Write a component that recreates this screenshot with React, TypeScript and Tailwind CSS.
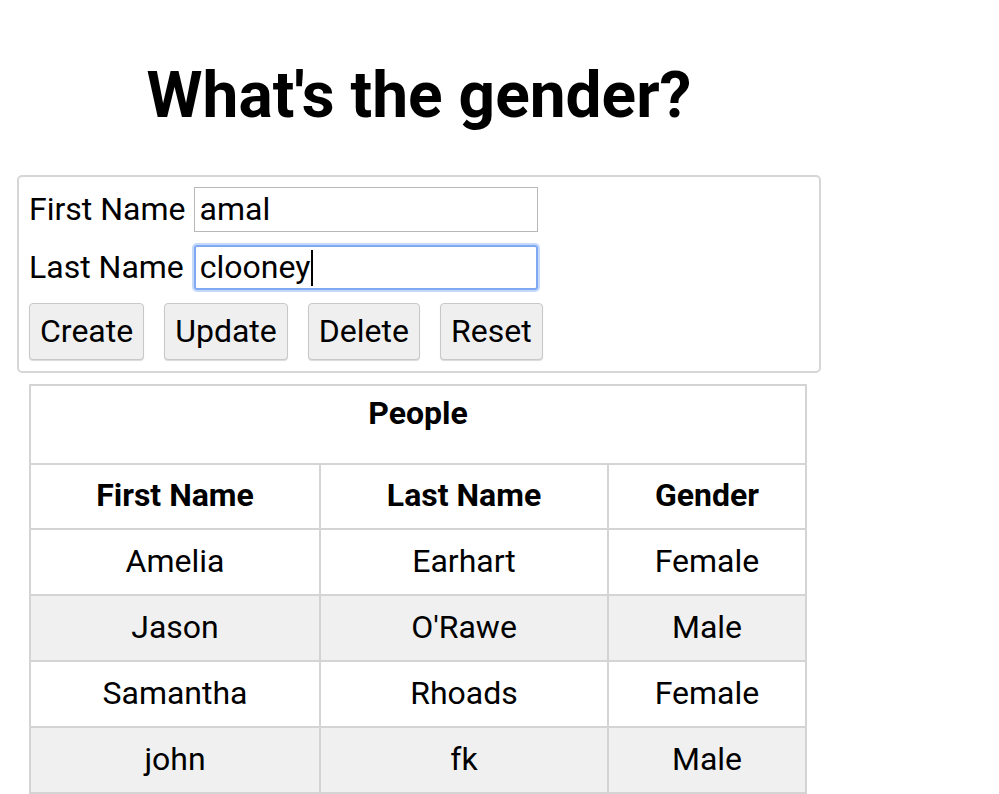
import React from "react";

const people = [
  { first: "Amelia", last: "Earhart", gender: "Female" },
  { first: "Jason", last: "O'Rawe", gender: "Male" },
  { first: "Samantha", last: "Rhoads", gender: "Female" },
  { first: "john", last: "fk", gender: "Male" },
];

const buttons = ["Create", "Update", "Delete", "Reset"];

export default function App() {
  return (
    <div className="min-h-screen bg-white text-black font-['Roboto','Liberation_Sans',sans-serif]">
      <div className="ml-[17px] w-[804px] flex flex-col">
        {/* Title */}
        <h1 className="mt-[64px] h-[64px] text-center text-[64px] leading-[64px] font-bold">
          What's the gender?
        </h1>

        {/* Form */}
        <div className="mt-[47px] border-2 border-[#d6d6d6] rounded-[5px] px-[10px] pt-[10px] pb-[11px] flex flex-col gap-[13px]">
          <div className="flex items-center h-[45px] gap-[8px]">
            <span className="text-[32px] leading-none pb-[2px]">First Name</span>
            <div className="w-[344px] h-[45px] border border-[#b8b8b8] flex items-center px-[5px] pb-[2px] text-[32px] leading-none">
              amal
            </div>
          </div>
          <div className="flex items-center h-[45px] gap-[10px]">
            <span className="text-[32px] leading-none pb-[2px]">Last Name</span>
            <div className="w-[344px] h-[45px] border-2 border-[#7fa9f2] rounded-[3px] shadow-[0_0_0_2px_#c5d9fa] flex items-center px-[4px] text-[32px] leading-none">
              <span className="pb-[2px]">clooney</span>
              <span className="inline-block w-[2px] h-[36px] bg-black ml-[1px]"></span>
            </div>
          </div>
          <div className="flex gap-[20px]">
            {buttons.map((b) => (
              <button
                key={b}
                className="h-[57px] px-[10px] pb-[2px] text-[32px] leading-none bg-[#efefef] border border-[#c8c8c8] rounded-[4px] shadow-[0_1px_1px_rgba(0,0,0,0.15)]"
              >
                {b}
              </button>
            ))}
          </div>
        </div>

        {/* Table */}
        <table className="mt-[11px] ml-[12px] w-[778px] border-collapse border-2 border-[#d4d4d4] text-[32px]">
          <thead>
            <tr className="h-[79px]">
              <th colSpan={3} className="border-2 border-[#d4d4d4] font-bold align-top pt-[3px]">
                People
              </th>
            </tr>
            <tr className="h-[65px]">
              <th className="w-[290px] border-2 border-[#d4d4d4] font-bold pb-[3px]">First Name</th>
              <th className="w-[288px] border-2 border-[#d4d4d4] font-bold pb-[3px]">Last Name</th>
              <th className="border-2 border-[#d4d4d4] font-bold pb-[3px]">Gender</th>
            </tr>
          </thead>
          <tbody>
            {people.map((p, i) => (
              <tr key={i} className={i % 2 === 1 ? "h-[66px] bg-[#f0f0f0]" : "h-[66px] bg-white"}>
                <td className="border-2 border-[#d4d4d4] text-center pb-[3px]">{p.first}</td>
                <td className="border-2 border-[#d4d4d4] text-center pb-[3px]">{p.last}</td>
                <td className="border-2 border-[#d4d4d4] text-center pb-[3px]">{p.gender}</td>
              </tr>
            ))}
          </tbody>
        </table>
      </div>
    </div>
  );
}
